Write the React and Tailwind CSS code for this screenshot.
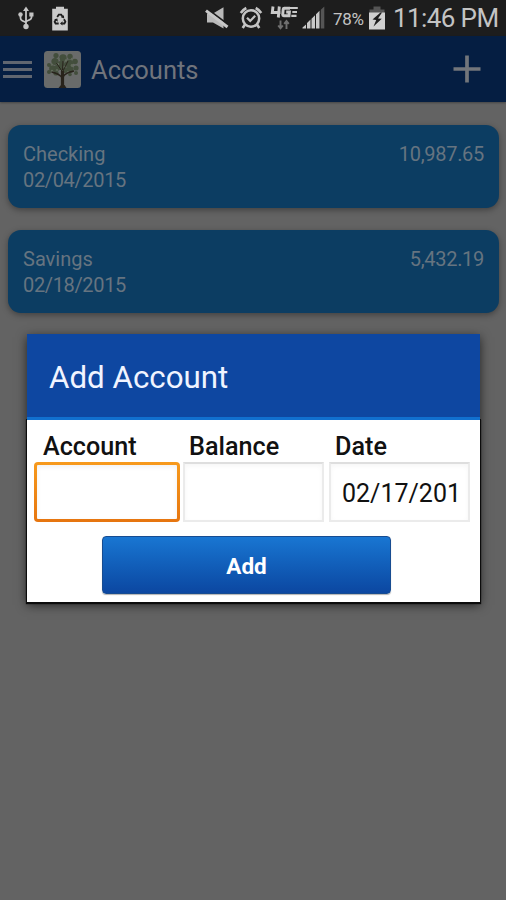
const accounts = [
  { name: 'Checking', date: '02/04/2015', balance: '10,987.65' },
  { name: 'Savings', date: '02/18/2015', balance: '5,432.19' },
]

const UsbIcon = () => (
  <svg className="h-[24px] w-[18px]" viewBox="0 0 18 24" fill="none" stroke="#c4c4c4" strokeWidth="1.8">
    <path d="M9 4v15M3.500 8v4q0 2 2 2.800L9 16.500M14.500 8.500v3q0 1.500-2 2.300L9 15.500" />
    <path d="M9 .5l3 4.500H6z" fill="#c4c4c4" stroke="none" />
    <circle cx="9" cy="20.500" r="2.700" fill="#c4c4c4" stroke="none" />
    <circle cx="3.500" cy="8.500" r="2.200" fill="#c4c4c4" stroke="none" />
    <path d="M12.300 6.500h4.200v4h-4.200z" fill="#c4c4c4" stroke="none" />
  </svg>
)

const RecycleBatteryIcon = () => (
  <svg className="h-[25px] w-[18px]" viewBox="0 0 18 25">
    <path d="M5 .8h8v2h3.800v21.700H1.200V2.800H5z" fill="#cacaca" />
    <g fill="none" stroke="#1d1d1d" strokeWidth="1.800">
      <path d="M6.200 11l1.600-2.300h2.400l1.400 2" />
      <path d="M13 13.200l1.400 2.600-1 1.700h-2.200" />
      <path d="M7.700 17.500H4.600l-1-1.700L5 13.400" />
    </g>
    <path d="M12.900 9.200l.3 3.300-3.200-1.300zM11.500 15.200v4.400l-2.500-2.200zM3.200 13.200l3.200-.8.400 3.300z" fill="#1d1d1d" />
  </svg>
)

const MuteIcon = () => (
  <svg className="h-[24px] w-[26px]" viewBox="0 0 26 24">
    <path d="M3 7.500h6L19.500 1.200v21.300L9 16.500H3z" fill="#b9b9b9" />
    <path d="M3 2.800L25 19.300" stroke="#1d1d1d" strokeWidth="1.800" />
    <path d="M2 4.600L23.500 21" stroke="#c8c8c8" strokeWidth="3" />
  </svg>
)

const AlarmIcon = () => (
  <svg className="h-[24px] w-[24px]" viewBox="0 0 24 24" fill="none" stroke="#c4c4c4">
    <circle cx="12" cy="12.500" r="8.200" strokeWidth="2.500" />
    <path d="M8 11.700l3.200 3.200 5-5.200" strokeWidth="2.200" />
    <path d="M1.800 7a15 15 0 0 1 5.500-5M22.200 7a15 15 0 0 0-5.500-5" strokeWidth="2.600" />
    <path d="M6 18.500l-2.300 3.500M18 18.500l2.300 3.500" strokeWidth="2.600" />
  </svg>
)

const LteIcon = () => (
  <svg className="h-[26px] w-[28px]" viewBox="0 0 28 26" fill="none">
    <g stroke="#c8c8c8">
      <path d="M3 2.500L2.300 8.500H10.500M9.300 2.500L8.300 13.500" strokeWidth="2.900" />
      <path d="M20 4.200h-5.700q-1 0-1.100 1l-.5 5.600q0 1 1 1h5.300l.4-3.800h-3.200" strokeWidth="2.900" />
      <path d="M20 4h7.800M22.300 8h4.700M21.300 11.800h5.200" strokeWidth="2.200" />
    </g>
    <path d="M10.500 16.500v8M8.200 21.500l2.300 2.800 2.300-2.800M16.500 25v-8M14.200 19.800l2.300-2.800 2.300 2.800" stroke="#707070" strokeWidth="1.900" />
  </svg>
)

const SignalIcon = () => (
  <svg className="h-[24px] w-[24px]" viewBox="0 0 24 24" fill="#c8c8c8">
    <path d="M.5 21.500L4 18.500v4H.5zM5 17l3.500-3.500v9H5zM9.500 12.700L13 9.200v13.300H9.500zM14 8.200l3.500-3.500v17.800H14z" />
    <path d="M18.800 3.700L22.300.5v22h-3.500z" fill="#555" />
  </svg>
)

const BatteryIcon = () => (
  <svg className="h-[24px] w-[18px]" viewBox="0 0 18 24">
    <path d="M5.500.5h7v3h4v4h-15v-4h4z" fill="#555" />
    <path d="M1 6.500h16V23.500H1z" fill="#d0d0d0" />
    <path d="M12.500 6.500L4.500 13.600l3.700.4L5.500 20.500l8.300-7.700-3.800-.4 4-5.900z" fill="#1d1d1d" />
  </svg>
)

const TreeIcon = () => (
  <svg className="h-[37px] w-[37px]" viewBox="0 0 37 37">
    <rect width="37" height="37" rx="3.500" fill="#696b6a" />
    <g fill="#434e3c">
      <circle cx="12" cy="4.500" r="2.600" />
      <circle cx="19" cy="7" r="3.700" />
      <circle cx="26" cy="5.500" r="2.700" />
      <circle cx="11" cy="10.500" r="3.600" />
      <circle cx="5" cy="14" r="2" />
      <circle cx="31" cy="10.500" r="2.800" />
      <circle cx="25" cy="12.500" r="4" />
      <circle cx="17" cy="14.500" r="4.500" />
      <circle cx="8.500" cy="17.500" r="3.300" />
      <circle cx="5" cy="21" r="2" />
      <circle cx="12" cy="22" r="2.600" />
      <circle cx="32" cy="17" r="2.600" />
      <circle cx="26" cy="18.500" r="3.500" />
      <circle cx="26" cy="23.500" r="1.800" />
      <circle cx="32" cy="22" r="2" />
      <circle cx="13" cy="17" r="3" />
      <circle cx="21" cy="19" r="3" />
    </g>
    <g fill="#626b5c">
      <circle cx="15" cy="8" r="1.100" />
      <circle cx="22" cy="9.500" r="1.300" />
      <circle cx="14" cy="13" r="1.300" />
      <circle cx="28" cy="14.500" r="1.400" />
      <circle cx="8" cy="13.500" r="1.100" />
      <circle cx="28" cy="8" r="1.200" />
      <circle cx="20.500" cy="16" r="1.200" />
      <circle cx="8" cy="20" r="1.200" />
      <circle cx="24" cy="21" r="1.100" />
      <circle cx="13" cy="19" r="1" />
    </g>
    <g fill="none" stroke="#28231b">
      <path d="M18.500 37V20" strokeWidth="3.200" />
      <path d="M18.500 27c-3-4-6-5-11-6M19 26c2-4 6-5 11-6" strokeWidth="1.500" />
      <path d="M18.500 21l-6-9M19 20l5-10M18.500 19l.5-9" strokeWidth="1" />
    </g>
    <path d="M14.500 37l2.500-3h3.500l2 3z" fill="#28231b" />
  </svg>
)

const StatusBar = () => (
  <div className="flex h-9 items-center bg-[#1d1d1d] text-[#c4c4c4]">
    <div className="ml-[17px] flex items-center gap-[16px]">
      <UsbIcon />
      <RecycleBatteryIcon />
    </div>
    <div className="ml-auto flex items-center pr-2">
      <MuteIcon />
      <div className="ml-[9px]"><AlarmIcon /></div>
      <div className="ml-[7px] -mt-[3px]"><LteIcon /></div>
      <div className="ml-[4px]"><SignalIcon /></div>
      <span className="ml-[7px] w-[32px] pt-[2px] text-[17px] leading-9 tracking-[-0.300px] whitespace-nowrap">78%</span>
      <div className="ml-[3px]"><BatteryIcon /></div>
      <span className="ml-[7px] w-[105px] text-[26px] leading-9 tracking-[-0.600px] whitespace-nowrap">11:46 PM</span>
    </div>
  </div>
)

const ActionBar = () => (
  <header className="flex h-[66px] items-center bg-[#051e42] shadow-[0_1px_2px_rgba(0,0,0,0.3)]">
    <div className="ml-[3px] flex w-[29px] flex-col gap-[4px]">
      <div className="h-[3px] bg-[#606670]" />
      <div className="h-[3px] bg-[#606670]" />
      <div className="h-[3px] bg-[#606670]" />
    </div>
    <div className="ml-3"><TreeIcon /></div>
    <h1 className="ml-[10px] pt-[3px] text-[25.500px] text-[#70747c]">Accounts</h1>
    <svg className="mr-[25px] ml-auto h-[28px] w-[28px]" viewBox="0 0 28 28">
      <path d="M14 .500v27M.500 14h27" stroke="#73767b" strokeWidth="3.700" />
    </svg>
  </header>
)

const AccountCard = ({ account }) => (
  <div className="flex h-[83px] justify-between rounded-[13px] bg-[#0c3d62] px-[15px] pt-4 text-[20px] leading-[26px] text-[#667480] shadow-[0_2px_6px_rgba(0,0,0,0.35)]">
    <div>
      <div>{account.name}</div>
      <div className="tracking-[-0.350px]">{account.date}</div>
    </div>
    <div className="tracking-[-0.300px]">{account.balance}</div>
  </div>
)

const AddAccountDialog = () => (
  <div className="absolute top-[334px] left-[27px] flex h-[268px] w-[453px] flex-col bg-white shadow-[0_3px_10px_rgba(0,0,0,0.65)]">
    <div className="z-10 flex h-[86px] items-center border-b-[3px] border-[#1170cf] bg-[#0e47a1] px-[22px] pt-[5px]">
      <h2 className="text-[31.300px] text-[#f0f4ff]">Add Account</h2>
    </div>
    <div className="flex flex-1 flex-col shadow-[0_0_0_1px_#0c0c0c,0_1px_1px_1px_#0c0c0c]">
      <div className="flex pt-[11px] pl-4 text-[25.200px] leading-[31px] font-medium text-[#111]">
        <span className="w-[146px]">Account</span>
        <span className="w-[146px]">Balance</span>
        <span>Date</span>
      </div>
      <div className="ml-[7px] flex h-[60px]">
        <div className="w-[146px] rounded-[4px] bg-gradient-to-b from-[#f79a1c] to-[#e6750f] p-[3px]">
          <div className="h-full rounded-[1px] bg-white shadow-[inset_0_2px_5px_rgba(0,0,0,0.06)]" />
        </div>
        <div className="ml-[3px] w-[141px] border-2 border-[#ebebeb] border-t-[#dedede] bg-white shadow-[inset_0_2px_5px_rgba(0,0,0,0.04)]" />
        <div className="ml-[5px] w-[141px] overflow-hidden border-2 border-[#ebebeb] border-t-[#dedede] bg-white pl-[11px] text-[25px] leading-[60px] text-[#111] shadow-[inset_0_2px_5px_rgba(0,0,0,0.04)]">
          02/17/201
        </div>
      </div>
      <button className="mt-[14px] ml-[75px] h-[58px] w-[289px] rounded-[4px] border border-[#174c91] bg-gradient-to-b from-[#1976d2] to-[#0c47a1] pt-[3px] text-[22.500px] font-bold text-white shadow-[0_1px_1px_rgba(0,0,0,0.3)]">
        Add
      </button>
    </div>
  </div>
)

export default function App() {
  return (
    <div className="relative flex h-[900px] w-[506px] flex-col overflow-hidden bg-[#636363] font-['Roboto',sans-serif]">
      <StatusBar />
      <ActionBar />
      <main className="flex flex-col gap-[22px] pt-[23px] pr-[7px] pl-2">
        {accounts.map(account => (
          <AccountCard key={account.name} account={account} />
        ))}
      </main>
      <AddAccountDialog />
    </div>
  )
}
